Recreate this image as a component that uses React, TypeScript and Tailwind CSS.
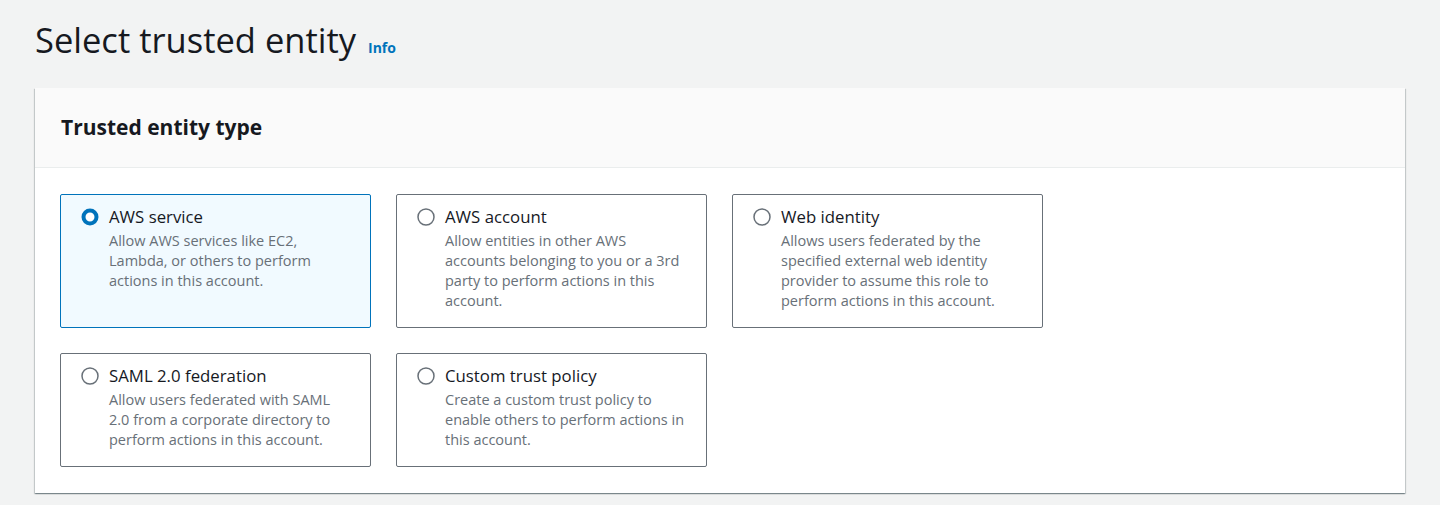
import React from "react";

const tiles = [
  [
    { title: "AWS service", desc: "Allow AWS services like EC2, Lambda, or others to perform actions in this account.", selected: true },
    { title: "AWS account", desc: "Allow entities in other AWS accounts belonging to you or a 3rd party to perform actions in this account." },
    { title: "Web identity", desc: "Allows users federated by the specified external web identity provider to assume this role to perform actions in this account." },
  ],
  [
    { title: "SAML 2.0 federation", desc: "Allow users federated with SAML 2.0 from a corporate directory to perform actions in this account." },
    { title: "Custom trust policy", desc: "Create a custom trust policy to enable others to perform actions in this account." },
  ],
];

function Radio({ checked }: { checked?: boolean }) {
  return checked ? (
    <svg width="18" height="18" viewBox="0 0 18 18" className="shrink-0">
      <circle cx="9" cy="9" r="6.5" fill="#ffffff" stroke="#0073bb" strokeWidth="4" />
    </svg>
  ) : (
    <svg width="18" height="18" viewBox="0 0 18 18" className="shrink-0">
      <circle cx="9" cy="9" r="8" fill="#ffffff" stroke="#687078" strokeWidth="1.5" />
    </svg>
  );
}

function Tile({ title, desc, selected }: { title: string; desc: string; selected?: boolean }) {
  return (
    <div
      className={
        selected
          ? "w-[311px] rounded-[2px] border border-[#0073bb] bg-[#f1faff] pl-5 pr-5 pt-[10px] pb-[16px]"
          : "w-[311px] rounded-[2px] border border-[#687078] bg-white pl-5 pr-5 pt-[10px] pb-[16px]"
      }
    >
      <div className="flex items-center gap-[10px]">
        <Radio checked={selected} />
        <span className="text-[16.8px] leading-[24px] text-[#16191f]">{title}</span>
      </div>
      <p className="mt-[2px] pl-[28px] text-[14.5px] leading-[20px] text-[#687078]">{desc}</p>
    </div>
  );
}

export default function App() {
  return (
    <div
      className="h-[505px] w-full overflow-hidden bg-[#f2f3f3]"
      style={{ fontFamily: '"Open Sans", "Noto Sans", Arial, sans-serif' }}
    >
      <div className="flex items-baseline gap-[12px] pl-[35px] pt-[14px]">
        <h1 className="text-[34.5px] leading-[52px] font-normal text-[#16191f]">Select trusted entity</h1>
        <span className="text-[14px] font-bold text-[#0073bb]">Info</span>
      </div>
      <div className="mt-[22px] ml-[35px] w-[1370px] bg-white shadow-[0_1px_1px_0_rgba(0,28,36,0.3),1px_1px_1px_0_rgba(0,28,36,0.15),-1px_1px_1px_0_rgba(0,28,36,0.15)]">
        <div className="flex h-[80px] items-center border-b border-[#eaeded] bg-[#fafafa] px-[26px]">
          <h2 className="text-[21px] font-bold text-[#16191f]">Trusted entity type</h2>
        </div>
        <div className="flex flex-col gap-[25px] px-[25px] pt-[26px] pb-[26px]">
          {tiles.map((row, i) => (
            <div key={i} className="flex items-stretch gap-[25px]">
              {row.map((t) => (
                <Tile key={t.title} {...t} />
              ))}
            </div>
          ))}
        </div>
      </div>
    </div>
  );
}
